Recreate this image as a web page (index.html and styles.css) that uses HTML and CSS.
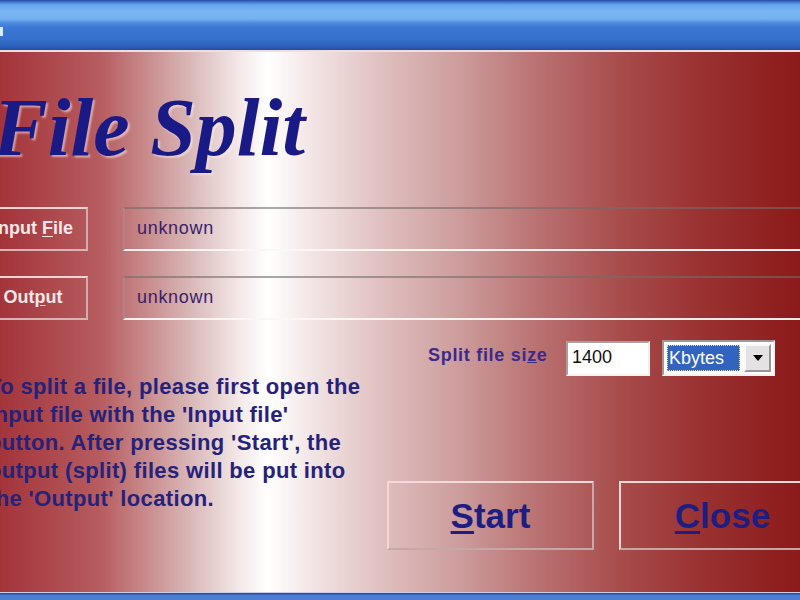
FILE: index.html
```html
<!DOCTYPE html>
<html lang="en">
<head>
<meta charset="utf-8">
<title>File Split</title>
<link rel="stylesheet" href="styles.css">
</head>
<body>
<div class="window">
  <div class="titlebar"><span class="title-mark"></span></div>

  <div class="client">
    <div class="panel">
      <h1 class="heading">File Split</h1>

      <div class="file-row">
        <button class="side-btn" type="button">Input <u>F</u>ile</button>
        <div class="path-field">unknown</div>
      </div>

      <div class="file-row second">
        <button class="side-btn" type="button">Out<u>p</u>ut</button>
        <div class="path-field">unknown</div>
      </div>

      <div class="lower">
        <p class="help">To split a file, please first open the<br>input file with the 'Input file'<br>button. After pressing 'Start', the<br>output (split) files will be put into<br>the 'Output' location.</p>

        <div class="right-col">
          <div class="size-row">
            <label class="size-label">Split file si<u>z</u>e</label>
            <div class="num-box">1400</div>
            <div class="combo">
              <span class="combo-value">Kbytes</span>
              <span class="combo-arrow">
                <svg width="10" height="6" viewBox="0 0 10 6"><path d="M0 0H10L5 6Z" fill="#000"/></svg>
              </span>
            </div>
          </div>

          <div class="actions">
            <button class="big-btn" type="button"><u>S</u>tart</button>
            <button class="big-btn" type="button"><u>C</u>lose</button>
          </div>
        </div>
      </div>
    </div>
  </div>

  <div class="bottom-edge"></div>
</div>
</body>
</html>
```

FILE: styles.css
```css
html, body {
  margin: 0;
  padding: 0;
  background: #8c1a1a;
}

.window {
  width: 800px;
  height: 600px;
  overflow: hidden;
  display: flex;
  flex-direction: column;
}

/* XP-style caption bar */
.titlebar {
  height: 50px;
  flex: none;
  position: relative;
  border-bottom: 2px solid #efdde2;
  background: linear-gradient(to bottom,
    #274c9c 0px, #3f77cf 2px, #69a6ec 5px, #79b6f2 12px, #72b0f0 19px,
    #4d8ade 23px, #3a77d2 28px, #3570cb 40px, #2d61bb 46px, #244e9e 50px);
}

.title-mark {
  position: absolute;
  left: 0;
  top: 27px;
  width: 3px;
  height: 9px;
  background: #dfe9fb;
}

.client {
  flex: 1;
  min-height: 0;
  overflow: hidden;
  background: linear-gradient(to right,
    #a3343a 0px, #b65c5f 100px, #d9b7b7 190px, #f4e9e9 240px, #ffffff 268px,
    #f3e6e6 310px, #e0c0c0 380px, #cc9c9c 460px, #b97070 540px,
    #a84c4c 620px, #9a3232 700px, #8c1a1a 800px);
}

.panel {
  margin-left: -22px;
  width: 860px;
  font-family: "Liberation Sans", Arial, sans-serif;
}

.heading {
  margin: 35px 0 0 15px;
  height: 82px;
  font-family: "Liberation Serif", "Times New Roman", serif;
  font-size: 82px;
  line-height: 82px;
  font-weight: bold;
  font-style: italic;
  color: #1a1a86;
  text-shadow: 2px 2px 2px rgba(255, 236, 236, 0.55);
  white-space: nowrap;
}

.file-row {
  display: flex;
  align-items: stretch;
  gap: 35px;
  height: 44px;
  margin-top: 38px;
}

.file-row.second {
  margin-top: 25px;
}

.side-btn {
  flex: none;
  width: 110px;
  margin: 0;
  padding: 0 0 2px;
  background: transparent;
  border: 2px solid;
  border-color: #f0d4d4 #d4aaaa #d8b4b4 #f0d4d4;
  font-family: "Liberation Sans", Arial, sans-serif;
  font-size: 18px;
  font-weight: bold;
  color: #f6e8e8;
  text-align: center;
}

.side-btn u {
  text-underline-offset: 2px;
}

.path-field {
  flex: 1;
  display: flex;
  align-items: center;
  padding: 0 0 2px 12px;
  border-style: solid;
  border-width: 2px 0 2px 2px;
  border-color: rgba(118, 108, 108, 0.6) transparent rgba(255, 246, 246, 0.95) rgba(170, 150, 150, 0.45);
  font-size: 18px;
  letter-spacing: 0.7px;
  color: #3b1d6c;
}

.lower {
  display: flex;
  margin-top: 20px;
}

.help {
  flex: none;
  width: 399px;
  margin: 0;
  padding: 33px 0 0 10px;
  font-size: 22px;
  line-height: 28px;
  font-weight: bold;
  letter-spacing: 0.35px;
  color: #24227a;
  white-space: nowrap;
}

.right-col {
  flex: 1;
  display: flex;
  flex-direction: column;
}

.size-row {
  display: flex;
  align-items: center;
  height: 36px;
  padding-left: 41px;
}

.size-label {
  width: 119px;
  margin-right: 19px;
  padding-bottom: 6px;
  font-size: 18px;
  font-weight: bold;
  letter-spacing: 0.7px;
  color: #3a2a8c;
  white-space: nowrap;
}

.num-box {
  box-sizing: border-box;
  width: 84px;
  height: 35px;
  margin-right: 12px;
  padding: 4px 0 0 4px;
  background: #fff;
  border: 2px solid;
  border-color: #a8a0a0 #f2eeee #f6f2f2 #a8a0a0;
  font-size: 18px;
  color: #101010;
}

.combo {
  box-sizing: border-box;
  display: flex;
  align-items: center;
  width: 113px;
  height: 36px;
  padding: 3px 2px 3px 3px;
  background: #fff;
  border: 2px solid;
  border-color: #a09898 #f4f0f0 #f4f0f0 #a09898;
}

.combo-value {
  box-sizing: border-box;
  width: 74px;
  height: 26px;
  padding: 2px 0 0 2px;
  background: #3264bf;
  outline: 1px dotted #e8e0b0;
  outline-offset: -1px;
  font-size: 18px;
  line-height: 22px;
  color: #fff;
}

.combo-arrow {
  box-sizing: border-box;
  display: flex;
  align-items: center;
  justify-content: center;
  width: 27px;
  height: 28px;
  margin-left: 4px;
  background: #e4e2e2;
  border: 2px solid;
  border-color: #f8f8f8 #9a9696 #9a9696 #f8f8f8;
}

.actions {
  display: flex;
  gap: 25px;
  margin-top: 105px;
}

.big-btn {
  flex: none;
  width: 207px;
  height: 69px;
  margin: 0;
  padding: 0;
  background: transparent;
  border: 2px solid;
  border-color: #f2dada #c8a8a8 #c4a8a8 #f0d8d8;
  font-family: "Liberation Sans", Arial, sans-serif;
  font-size: 35px;
  font-weight: bold;
  color: #1e1e82;
}

.big-btn u {
  text-underline-offset: 3px;
  text-decoration-thickness: 3px;
}

.bottom-edge {
  height: 8px;
  flex: none;
  background: linear-gradient(to bottom, #c8cdea 0px, #c8cdea 1px, #2d4f9e 1px, #2d4f9e 2px, #4a7bd2 3px, #4f80d6 8px);
}
```
